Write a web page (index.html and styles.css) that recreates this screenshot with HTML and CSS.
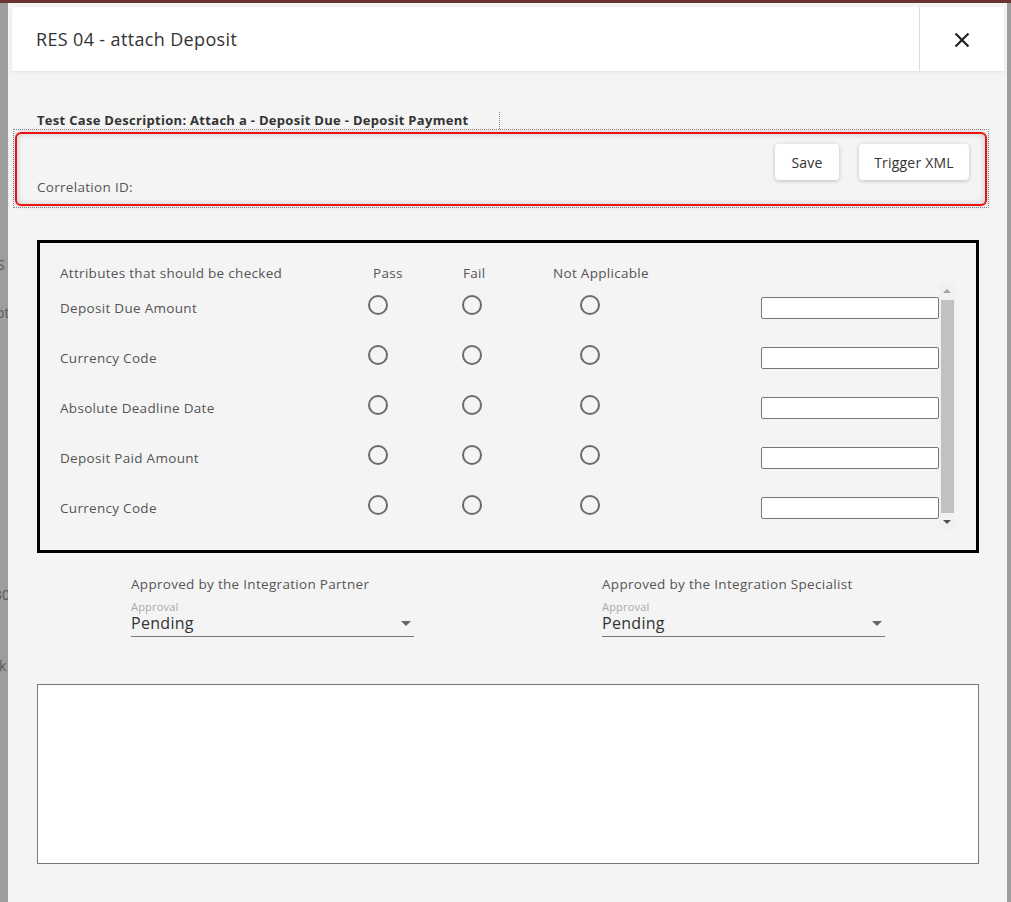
FILE: index.html
```html
<!DOCTYPE html>
<html>
<head>
<meta charset="utf-8">
<link rel="stylesheet" href="styles.css">
</head>
<body>
<div class="topbar"></div>
<div class="stage">
  <div class="backdrop-left">
    <span class="bg-t bg1">S</span>
    <span class="bg-t bg2">ot</span>
    <span class="bg-t bg3">30</span>
    <span class="bg-t bg4">k</span>
  </div>
  <div class="modal">
    <div class="modal-header">
      <div class="modal-title">RES 04 - attach Deposit</div>
      <div class="modal-close">
        <svg width="16" height="16" viewBox="0 0 16 16"><path d="M1.5 1.5 L14.5 14.5 M14.5 1.5 L1.5 14.5" stroke="#222" stroke-width="2.2" fill="none"/></svg>
      </div>
    </div>
    <div class="modal-body">
      <div class="desc-wrap"><div class="desc">Test Case Description: Attach a - Deposit Due - Deposit Payment</div></div>
      <div class="dotted">
        <div class="redbox">
          <div class="corr">Correlation ID:</div>
          <div class="btns">
            <button class="btn save">Save</button>
            <button class="btn trig">Trigger XML</button>
          </div>
        </div>
      </div>

      <div class="checks">
        <div class="head-row">
          <div class="h-attr">Attributes that should be checked</div>
          <div class="h-pass">Pass</div>
          <div class="h-fail">Fail</div>
          <div class="h-na">Not Applicable</div>
        </div>
        <div class="scroller">
          <div class="rows">
            <div class="row"><div class="lbl">Deposit Due Amount</div><span class="radio r1"></span><span class="radio r2"></span><span class="radio r3"></span><span class="inp"></span></div>
            <div class="row"><div class="lbl">Currency Code</div><span class="radio r1"></span><span class="radio r2"></span><span class="radio r3"></span><span class="inp"></span></div>
            <div class="row"><div class="lbl">Absolute Deadline Date</div><span class="radio r1"></span><span class="radio r2"></span><span class="radio r3"></span><span class="inp"></span></div>
            <div class="row"><div class="lbl">Deposit Paid Amount</div><span class="radio r1"></span><span class="radio r2"></span><span class="radio r3"></span><span class="inp"></span></div>
            <div class="row"><div class="lbl">Currency Code</div><span class="radio r1"></span><span class="radio r2"></span><span class="radio r3"></span><span class="inp"></span></div>
          </div>
          <div class="sbar">
            <span class="arrow up"></span>
            <span class="thumb"></span>
            <span class="arrow down"></span>
          </div>
        </div>
      </div>

      <div class="approvals">
        <div class="appr a1">
          <div class="appr-title">Approved by the Integration Partner</div>
          <div class="sel-label">Approval</div>
          <div class="sel"><span>Pending</span><span class="caret"></span></div>
        </div>
        <div class="appr a2">
          <div class="appr-title">Approved by the Integration Specialist</div>
          <div class="sel-label">Approval</div>
          <div class="sel"><span>Pending</span><span class="caret"></span></div>
        </div>
      </div>

      <div class="notes"></div>
    </div>
  </div>
  <div class="backdrop-right"></div>
</div>
</body>
</html>
```
FILE: styles.css
```css
* { box-sizing: border-box; }
html, body { margin: 0; padding: 0; }
body {
  width: 1011px;
  height: 902px;
  overflow: hidden;
  background: #9d9d9d;
  font-family: "Open Sans", "Liberation Sans", sans-serif;
  color: #555;
}
.topbar { height: 3px; background: #6a3232; }
.stage { display: flex; height: 899px; }
.backdrop-left {
  width: 8px; background: #9d9d9d; position: relative; overflow: hidden;
}
.bg-t { position: absolute; left: -3px; font-size: 14px; color: #5a5a5a; }
.bg1 { top: 252px; }
.bg2 { top: 300px; left: -4px; }
.bg3 { top: 582px; left: -6px; }
.bg4 { top: 653px; left: -1px; }
.backdrop-right { width: 4px; background: #9d9d9d; }
.modal {
  width: 999px;
  background: #f4f4f4;
  padding: 4px 3px 0 4px;
  display: flex;
  flex-direction: column;
}
.modal-header {
  height: 64px;
  background: #fff;
  display: flex;
  box-shadow: 0 1px 3px rgba(0,0,0,0.08);
}
.modal-title {
  flex: 1;
  padding-left: 24px;
  display: flex;
  align-items: center;
  font-size: 18px;
  letter-spacing: 0.35px;
  color: #333;
}
.modal-close {
  width: 85px;
  border-left: 1px solid #dcdcdc;
  display: flex;
  align-items: center;
  justify-content: center;
  padding-top: 2px;
}
.modal-body { padding: 0 0 0 1px; }
.desc-wrap {
  margin-top: 41px;
  width: 487px;
  padding-left: 24px;
  border-right: 1px dotted #888;
  height: 17px;
}
.desc {
  font-size: 13px;
  font-weight: 700;
  letter-spacing: 0.3px;
  color: #333;
  line-height: 17px;
  white-space: nowrap;
}
.dotted {
  width: 976px;
  border: 1px dotted #888;
  padding: 2px 1px 1px;
}
.redbox {
  height: 74px;
  border: 2px solid #ee1111;
  border-radius: 6px;
  box-shadow: inset 0 0 6px rgba(0,0,0,0.18), 0 0 5px rgba(0,0,0,0.18);
  display: flex;
  justify-content: space-between;
  padding: 10px 16px 8px 20px;
}
.corr { align-self: flex-end; font-size: 13.5px; letter-spacing: 0.3px; color: #555; line-height: 18px; }
.btns { display: flex; gap: 20px; align-self: flex-start; }
.btn {
  height: 36px;
  background: #fff;
  border: none;
  border-radius: 4px;
  box-shadow: 0 1px 4px rgba(0,0,0,0.22);
  font-family: inherit;
  font-size: 14px;
  letter-spacing: 0.2px;
  color: #333;
  padding: 0;
}
.save { width: 64px; }
.trig { width: 110px; }

.checks {
  margin: 32px 0 0 24px;
  width: 942px;
  height: 313px;
  border: 3px solid #000;
  padding: 20px 21px 0 20px;
}
.head-row {
  display: flex;
  height: 20px;
  font-size: 13.5px;
  letter-spacing: 0.3px;
  line-height: 20px;
  color: #555;
}
.h-attr { width: 313px; }
.h-pass { width: 90px; }
.h-fail { width: 90px; }
.h-na { }
.scroller {
  display: flex;
  height: 247px;
}
.rows { flex: 1; overflow: hidden; }
.row {
  height: 50px;
  display: flex;
  align-items: center;
  font-size: 13.5px;
  letter-spacing: 0.3px;
  color: #555;
}
.lbl { width: 309px; }
.radio {
  width: 20px; height: 20px;
  border: 2px solid #6b6b6b;
  border-radius: 50%;
  margin-top: -6px;
  flex: none;
}
.r2 { margin-left: 74px; }
.r3 { margin-left: 98px; }
.inp {
  margin-left: 161px;
  width: 178px;
  height: 22px;
  background: #fff;
  border: 1px solid #777;
  border-radius: 2px;
  flex: none;
}
.sbar {
  width: 16px;
  background: #f1f1f1;
  display: flex;
  flex-direction: column;
  align-items: center;
}
.arrow {
  width: 0; height: 0;
  border-left: 4px solid transparent;
  border-right: 4px solid transparent;
  margin: 6px 0 4px;
}
.arrow.up { border-bottom: 4px solid #a3a3a3; }
.arrow.down { border-top: 4px solid #505050; margin: 4px 0 6px; }
.thumb {
  flex: 1;
  width: 13px;
  background: #c1c1c1;
  margin: 3px 0 3px;
}

.approvals {
  display: flex;
  margin-top: 22px;
  padding-left: 118px;
  gap: 188px;
}
.appr { width: 283px; }
.appr-title { font-size: 13.5px; letter-spacing: 0.3px; color: #555; line-height: 18px; }
.sel-label { font-size: 11px; letter-spacing: 0.2px; color: #a9a9a9; margin-top: 8px; line-height: 12px; }
.sel {
  display: flex;
  justify-content: space-between;
  align-items: flex-start;
  border-bottom: 1px solid #777;
  height: 24px;
  padding-top: 1px;
  font-size: 16px;
  letter-spacing: 0.3px;
  color: #333;
  line-height: 18px;
}
.caret {
  width: 0; height: 0;
  border-left: 5px solid transparent;
  border-right: 5px solid transparent;
  border-top: 5px solid #666;
  margin: 7px 3px 0 0;
}
.notes {
  margin: 47px 0 0 24px;
  width: 942px;
  height: 180px;
  background: #fff;
  border: 1px solid #777;
}
```
